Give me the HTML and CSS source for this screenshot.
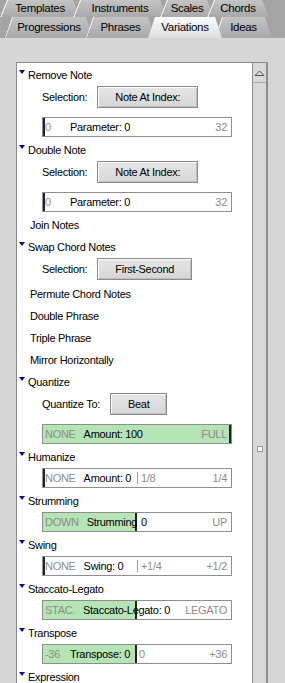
FILE: index.html
```html
<!DOCTYPE html>
<html lang="en">
<head>
    <meta charset="UTF-8">
    <title>Variations</title>
    <link rel="stylesheet" href="styles.css">
</head>
<body>
    <!-- Tab rows -->
    <div class="tabs">
        <div class="tab-row back">
            <div class="tab templates">Templates</div>
            <div class="tab instruments">Instruments</div>
            <div class="tab scales">Scales</div>
            <div class="tab chords">Chords</div>
        </div>
        <div class="tab-row front">
            <div class="tab progressions">Progressions</div>
            <div class="tab phrases">Phrases</div>
            <div class="tab variations selected">Variations</div>
            <div class="tab ideas">Ideas</div>
        </div>
    </div>

    <div class="panel">
        <div class="list">
            <div class="head">Remove Note</div>
            <div class="option"><span>Selection:</span><button class="btn">Note At Index:</button></div>
            <div class="slider after-option">
                <div class="half left knob-start"><span class="min">0</span><span class="label">Parameter: 0</span></div>
                <div class="half right"><span class="max">32</span></div>
            </div>

            <div class="head">Double Note</div>
            <div class="option"><span>Selection:</span><button class="btn">Note At Index:</button></div>
            <div class="slider after-option">
                <div class="half left knob-start"><span class="min">0</span><span class="label">Parameter: 0</span></div>
                <div class="half right"><span class="max">32</span></div>
            </div>

            <div class="item">Join Notes</div>

            <div class="head">Swap Chord Notes</div>
            <div class="option"><span>Selection:</span><button class="btn">First-Second</button></div>

            <div class="item">Permute Chord Notes</div>
            <div class="item">Double Phrase</div>
            <div class="item">Triple Phrase</div>
            <div class="item">Mirror Horizontally</div>

            <div class="head">Quantize</div>
            <div class="option"><span>Quantize To:</span><button class="btn">Beat</button></div>
            <div class="slider after-option full">
                <div class="half left"><span class="min">NONE</span><span class="label">Amount: 100</span></div>
                <div class="half right knob-end"><span class="max">FULL</span></div>
            </div>

            <div class="head">Humanize</div>
            <div class="slider">
                <div class="half left knob-start"><span class="min">NONE</span><span class="label">Amount: 0</span></div>
                <div class="half right"><span class="tick">1/8</span><span class="max">1/4</span></div>
            </div>

            <div class="head">Strumming</div>
            <div class="slider">
                <div class="half left filled knob-mid"><span class="min">DOWN</span><span class="label">Strumming</span></div>
                <div class="half right"><span class="value">0</span><span class="max">UP</span></div>
            </div>

            <div class="head">Swing</div>
            <div class="slider">
                <div class="half left knob-start"><span class="min">NONE</span><span class="label">Swing: 0</span></div>
                <div class="half right"><span class="tick">+1/4</span><span class="max">+1/2</span></div>
            </div>

            <div class="head">Staccato-Legato</div>
            <div class="slider">
                <div class="half left filled knob-mid"><span class="min">STAC.</span><span class="label">Staccato-Legato: 0</span></div>
                <div class="half right"><span class="max">LEGATO</span></div>
            </div>

            <div class="head">Transpose</div>
            <div class="slider">
                <div class="half left filled knob-mid"><span class="min">-36</span><span class="label">Transpose: 0</span></div>
                <div class="half right"><span class="value dim">0</span><span class="max">+36</span></div>
            </div>

            <div class="head">Expression</div>
        </div>

        <!-- Vertical scrollbar -->
        <div class="scrollbar">
            <div class="scroll-up">
                <svg width="13" height="19" viewBox="0 0 13 19">
                    <path d="M2 12.5 L6.5 8 L11 12.5 Z" fill="none" stroke="#555" stroke-width="1"/>
                </svg>
            </div>
            <div class="scroll-track">
                <div class="thumb"></div>
            </div>
        </div>
    </div>
</body>
</html>
```

FILE: styles.css
```css
body {
    margin: 0;
    background-color: #d6d6d6;
    font-family: 'Liberation Sans', Arial, sans-serif;
    font-size: 11px;
    letter-spacing: -0.3px;
    color: #000;
    height: 683px;
    overflow: hidden;
    display: flex;
    flex-direction: column;
}

/* Tabs */
.tabs {
    background-color: #a4a4a4;
    height: 38px;
    flex-shrink: 0;
}

.tab-row {
    display: flex;
}

.tab-row.back {
    height: 17px;
}

.tab-row.front {
    height: 21px;
    padding-left: 5px;
}

.tab {
    position: relative; /* stacking of overlapping tabs */
    margin-left: -7px;
    text-align: center;
    font-size: 11.5px;
    clip-path: polygon(7px 0, calc(100% - 7px) 0, 100% 100%, 0 100%);
    background:
        linear-gradient(112deg, transparent 6.4px, #eeeeee 6.4px, #eeeeee 7.6px, transparent 7.6px),
        linear-gradient(#c4c4c4, #a9a9a9);
}

.tab:first-child {
    margin-left: 0;
}

.back .tab {
    line-height: 17px;
}

.front .tab {
    line-height: 21px;
    background:
        linear-gradient(109deg, transparent 6.5px, #eeeeee 6.5px, #eeeeee 7.7px, transparent 7.7px),
        linear-gradient(#c4c4c4, #a9a9a9);
}

.tab.selected {
    z-index: 1;
    background: linear-gradient(#fbfbfb, #dedede);
}

.templates { width: 80px; }
.instruments { width: 94px; }
.scales { width: 54px; }
.chords { width: 62px; }
.progressions { width: 88px; }
.phrases { width: 69px; }
.variations { width: 74px; }
.ideas { width: 57px; }

/* Panel */
.panel {
    margin: 24px 17px 0 16px;
    border-top: 1px solid #8a8a8a;
    border-left: 1px solid #8a8a8a;
    border-right: 2px solid #8e8e8e;
    background-color: #fff;
    flex: 1;
    display: flex;
    min-height: 0;
}

.list {
    flex: 1;
    padding-top: 1px;
    white-space: nowrap;
    display: flex;
    flex-direction: column;
}

.head {
    height: 22px;
    line-height: 22px;
    padding-left: 2px;
    display: flex;
    align-items: center;
    flex-shrink: 0;
}

.head::before {
    content: '';
    width: 0;
    height: 0;
    border-top: 4px solid #0000b8;
    border-left: 3.5px solid transparent;
    border-right: 3.5px solid transparent;
    margin-right: 3px;
    margin-top: -7px;
}

.item {
    height: 22px;
    line-height: 22px;
    padding-left: 13px;
    flex-shrink: 0;
}

.option {
    height: 22px;
    margin-bottom: 3px;
    padding-left: 25px;
    display: flex;
    align-items: center;
    gap: 10px;
    flex-shrink: 0;
}

.btn {
    height: 22px;
    padding: 0 17px;
    font-family: inherit;
    font-size: 11px;
    letter-spacing: -0.3px;
    color: #000;
    background: linear-gradient(#e6e6e6, #d6d6d6);
    border: 1px solid #8c8c8c;
    border-radius: 0;
    box-shadow: inset 1px 1px 0 #fafafa, inset -1px -1px 0 #bdbdbd;
}

/* Sliders */
.slider {
    width: 188px;
    height: 18px;
    margin: 0 0 2px 25px;
    border: 1px solid #8e8e8e;
    display: grid;
    grid-template-columns: 1fr 1fr;
    line-height: 18px;
    background-color: #fff;
    flex-shrink: 0;
}

.slider.after-option {
    margin-top: 6px;
}

.slider.full {
    background-color: #b5e4b5;
}

.half {
    display: flex;
    min-width: 0;
}

.half span {
    flex-shrink: 0;
}

.half.left {
    padding-left: 2px;
}

.half.right {
    padding-right: 4px;
}

.half.filled {
    background-color: #b5e4b5;
}

.knob-start {
    border-left: 2px solid #222;
}

.half.left.knob-start {
    padding-left: 0;
}

.knob-mid {
    border-right: 2px solid #222;
}

.half.right.knob-end {
    border-right: 2px solid #222;
    padding-right: 2px;
}

.min {
    min-width: 17px;
    margin-right: 8px;
    color: #8c8c8c;
}

.max {
    margin-left: auto;
    color: #8c8c8c;
}

.tick {
    color: #8c8c8c;
    border-left: 1px solid #a0a0a0;
    height: 12px;
    line-height: 12px;
    margin-top: 3px;
    padding-left: 3px;
}

.value {
    padding-left: 4px;
}

.value.dim {
    color: #8c8c8c;
    padding-left: 2px;
}

/* Scrollbar */
.scrollbar {
    width: 13px;
    border-left: 1px solid #8e8e8e;
    background-color: #d9d9d9;
    display: flex;
    flex-direction: column;
}

.scroll-up {
    height: 19px;
    border-bottom: 1px solid #a8a8a8;
}

.scroll-up svg {
    display: block;
}

.scroll-track {
    flex: 1;
    display: flex;
    justify-content: center;
    padding-top: 363px;
}

.thumb {
    width: 4px;
    height: 4px;
    border: 1px solid #9a9a9a;
    background-color: #f4f4f4;
}
```
